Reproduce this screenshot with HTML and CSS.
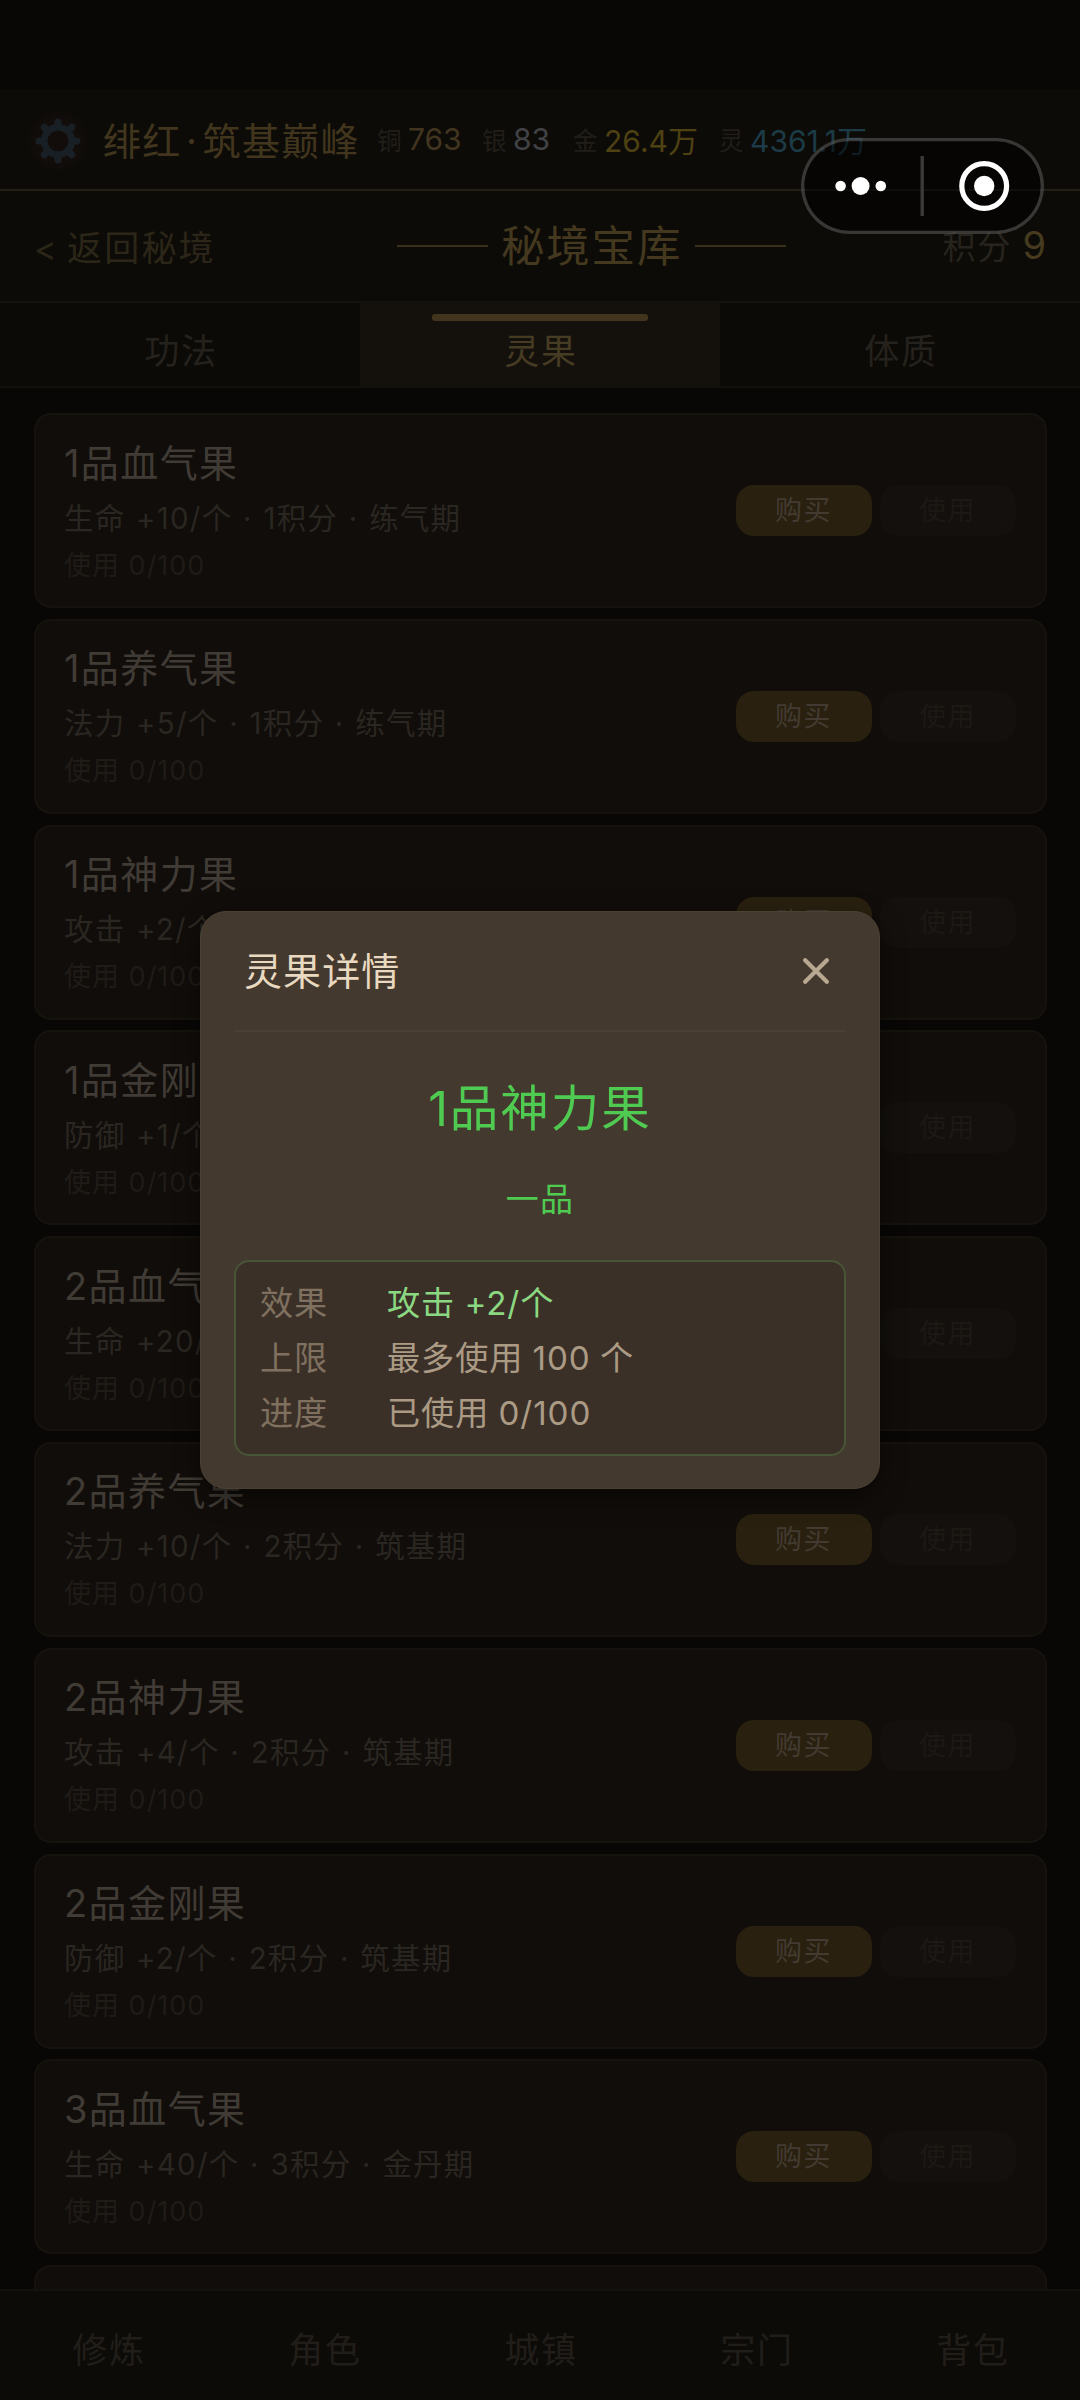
FILE: index.html
```html
<!DOCTYPE html>
<html lang="zh-CN">
<head>
<meta charset="utf-8">
<title>秘境宝库</title>
<link rel="stylesheet" href="styles.css">
</head>
<body>
<div class="screen">
  <header class="status">
    <svg class="gear" viewBox="-30 -30 60 60">
      <circle r="13.8" fill="none" stroke-width="6.6"/>
      <g stroke-width="7" stroke-linecap="round">
        <path d="M0-16V-19M0 16V19M-16 0H-19M16 0H19M-11.5-11.5L-13.7-13.7M11.5-11.5L13.7-13.7M-11.5 11.5L-13.7 13.7M11.5 11.5L13.7 13.7"/>
      </g>
    </svg>
    <div class="player">绯红<i>·</i>筑基巅峰</div>
    <div class="coin copper"><span>铜</span><b>763</b></div>
    <div class="coin silver"><span>银</span><b>83</b></div>
    <div class="coin gold"><span>金</span><b>26.4万</b></div>
    <div class="coin spirit"><span>灵</span><b>4361.1万</b></div>
  </header>

  <div class="titlebar">
    <div class="back"><span>&lt;</span>返回秘境</div>
    <h1>秘境宝库</h1>
    <div class="points"><span>积分</span><b>9</b></div>
  </div>

  <nav class="tabs">
    <div class="tab">功法</div>
    <div class="tab active">灵果</div>
    <div class="tab">体质</div>
  </nav>

  <main class="list">
    <section class="card">
      <div class="info"><h2>1品血气果</h2><p class="desc">生命 +10/个 · 1积分 · 练气期</p><p class="used">使用 0/100</p></div>
      <div class="btn buy">购买</div><div class="btn use">使用</div>
    </section>
    <section class="card">
      <div class="info"><h2>1品养气果</h2><p class="desc">法力 +5/个 · 1积分 · 练气期</p><p class="used">使用 0/100</p></div>
      <div class="btn buy">购买</div><div class="btn use">使用</div>
    </section>
    <section class="card">
      <div class="info"><h2>1品神力果</h2><p class="desc">攻击 +2/个 · 1积分 · 练气期</p><p class="used">使用 0/100</p></div>
      <div class="btn buy">购买</div><div class="btn use">使用</div>
    </section>
    <section class="card">
      <div class="info"><h2>1品金刚果</h2><p class="desc">防御 +1/个 · 1积分 · 练气期</p><p class="used">使用 0/100</p></div>
      <div class="btn buy">购买</div><div class="btn use">使用</div>
    </section>
    <section class="card">
      <div class="info"><h2>2品血气果</h2><p class="desc">生命 +20/个 · 2积分 · 筑基期</p><p class="used">使用 0/100</p></div>
      <div class="btn buy">购买</div><div class="btn use">使用</div>
    </section>
    <section class="card">
      <div class="info"><h2>2品养气果</h2><p class="desc">法力 +10/个 · 2积分 · 筑基期</p><p class="used">使用 0/100</p></div>
      <div class="btn buy">购买</div><div class="btn use">使用</div>
    </section>
    <section class="card">
      <div class="info"><h2>2品神力果</h2><p class="desc">攻击 +4/个 · 2积分 · 筑基期</p><p class="used">使用 0/100</p></div>
      <div class="btn buy">购买</div><div class="btn use">使用</div>
    </section>
    <section class="card">
      <div class="info"><h2>2品金刚果</h2><p class="desc">防御 +2/个 · 2积分 · 筑基期</p><p class="used">使用 0/100</p></div>
      <div class="btn buy">购买</div><div class="btn use">使用</div>
    </section>
    <section class="card">
      <div class="info"><h2>3品血气果</h2><p class="desc">生命 +40/个 · 3积分 · 金丹期</p><p class="used">使用 0/100</p></div>
      <div class="btn buy">购买</div><div class="btn use">使用</div>
    </section>
    <section class="card"></section>
  </main>

  <nav class="bottom">
    <div>修炼</div><div>角色</div><div>城镇</div><div>宗门</div><div>背包</div>
  </nav>

  <div class="modal">
    <div class="modal-head">
      <span>灵果详情</span>
      <svg class="close" viewBox="0 0 26 26"><path d="M2.2 2.2L23.8 23.8M23.8 2.2L2.2 23.8"/></svg>
    </div>
    <div class="fruit">1品神力果</div>
    <div class="grade">一品</div>
    <dl class="facts">
      <dt>效果</dt><dd class="effect">攻击 +2/个</dd>
      <dt>上限</dt><dd>最多使用 100 个</dd>
      <dt>进度</dt><dd>已使用 0/100</dd>
    </dl>
  </div>

  <div class="capsule">
    <svg viewBox="0 0 243 96">
      <g fill="#fff">
        <circle cx="39.6" cy="48" r="5.3"/>
        <circle cx="59.6" cy="48" r="9"/>
        <circle cx="79.8" cy="48" r="5.3"/>
        <circle cx="183.2" cy="48" r="10.2"/>
      </g>
      <path d="M121.2 18V78" stroke="#3a3a3a" stroke-width="3.4"/>
      <circle cx="183.2" cy="48" r="22.4" fill="none" stroke="#fff" stroke-width="5.2"/>
    </svg>
  </div>
</div>
</body>
</html>
```
FILE: styles.css
```css
* {
  box-sizing: border-box;
  margin: 0;
  padding: 0;
}

body {
  background: #080706;
  font-family: Inter, "Noto Sans CJK SC", sans-serif;
  font-weight: 400;
}

h1, h2, b, i {
  font-weight: 400;
  font-style: normal;
}

.screen {
  position: relative;
  display: flex;
  flex-direction: column;
  width: 1080px;
  height: 2400px;
  padding-top: 89px;
  overflow: hidden;
  white-space: nowrap;
}

/* player status */
.status {
  display: flex;
  align-items: center;
  flex: none;
  height: 102px;
  padding-left: 28px;
  background: #0d0b08;
  border-bottom: 2px solid #231e16;
}

.gear {
  flex: none;
  width: 60px;
  height: 60px;
  margin-top: 3px;
  stroke: #192025;
  background: radial-gradient(circle, #120d0b 50%, #0d0b08 72%);
}

.player {
  flex: none;
  width: 288px;
  padding: 0 0 2px 15px;
  font-size: 38px;
  letter-spacing: 1.3px;
  color: #41361d;
}

.player i {
  display: inline-block;
  width: 21px;
  text-align: center;
}

.coin {
  display: flex;
  align-items: center;
  flex: none;
  font-size: 30px;
}

.coin span {
  width: 31px;
  font-size: 24.5px;
  color: #211e19;
}

.copper { width: 105px; margin-left: 1px; color: #41351f; }
.silver { width: 91px; color: #414246; }
.gold { width: 146px; color: #4e4112; }
.spirit { color: #1c3b47; }

/* page title */
.titlebar {
  display: flex;
  align-items: center;
  flex: none;
  height: 112px;
  padding: 0 34px;
  background: #0d0b07;
  border-bottom: 2px solid #14120d;
}

.back {
  width: 363px;
  padding-bottom: 2px;
  font-size: 35px;
  letter-spacing: 2.2px;
  color: #2c2618;
}

.back span {
  display: inline-block;
  width: 33px;
  font-size: 34px;
}

h1 {
  display: flex;
  align-items: center;
  gap: 13px;
  height: 60px;
  line-height: 56px;
  font-size: 43.5px;
  letter-spacing: 1.8px;
  color: #44391f;
}

h1::before,
h1::after {
  content: "";
  width: 91px;
  height: 2px;
  background: #3a301b;
}

.points {
  display: flex;
  align-items: center;
  gap: 10px;
  margin-left: auto;
  padding-bottom: 2px;
  color: #27231d;
  font-size: 33px;
  letter-spacing: 2px;
}

.points b {
  font-size: 38px;
  letter-spacing: 0;
  color: #463a1f;
}

/* tabs */
.tabs {
  display: flex;
  flex: none;
  height: 85px;
  background: #0c0a07;
  border-bottom: 2px solid #12100c;
}

.tab {
  position: relative;
  flex: 1;
  padding: 11px 0 0 2px;
  line-height: 75px;
  text-align: center;
  font-size: 35px;
  letter-spacing: 1.8px;
  color: #25221d;
}

.tab.active {
  background: #14110c;
  color: #463b23;
}

.tab.active::before {
  content: "";
  position: absolute;
  top: 11px;
  left: 72px;
  right: 72px;
  height: 7px;
  border-radius: 3px;
  background: #41361d;
}

/* fruit list */
.list {
  display: flex;
  flex-direction: column;
  flex: 1;
  gap: 10.8px;
  min-height: 0;
  padding: 25px 33.5px 0;
  overflow: hidden;
}

.card {
  display: flex;
  align-items: center;
  flex: none;
  height: 195px;
  padding: 0 29px 0 28.5px;
  background: #110d0a;
  border: 2px solid #16130e;
  border-radius: 17px;
}

.info {
  flex: 1;
}

h2 {
  line-height: 56px;
  font-size: 38px;
  letter-spacing: 1.4px;
  color: #403b35;
}

.desc {
  line-height: 54px;
  font-size: 29.5px;
  letter-spacing: 1.2px;
  word-spacing: 1.2px;
  color: #2a2621;
}

.used {
  line-height: 42px;
  font-size: 27px;
  letter-spacing: 1px;
  color: #1f1b17;
}

.btn {
  width: 136px;
  height: 51px;
  border-radius: 18px;
  line-height: 51px;
  text-align: center;
  font-size: 27px;
  letter-spacing: 1.4px;
}

.buy {
  margin-right: 8px;
  background: #29200f;
  color: #433b31;
}

.use {
  background: #13100d;
  color: #1c1915;
}

/* main navigation */
.bottom {
  display: flex;
  flex: none;
  height: 111px;
  padding-top: 2px;
  background: #0d0b08;
  border-top: 2px solid #14120e;
}

.bottom div {
  flex: 1;
  padding-left: 2px;
  line-height: 115px;
  text-align: center;
  font-size: 35px;
  letter-spacing: 1.8px;
  color: #211e1a;
}

/* detail dialog */
.modal {
  position: absolute;
  top: 911px;
  left: 200px;
  width: 680px;
  height: 578px;
  padding: 0 34px;
  border-radius: 26px;
  border: 1px solid #4a4033;
  background: #44392e;
  box-shadow: 0 8px 24px rgba(0, 0, 0, .5);
}

.modal-head {
  display: flex;
  align-items: center;
  justify-content: space-between;
  height: 120px;
  padding: 0 16px 0 9px;
  border-bottom: 2px solid #4b4134;
  font-size: 38px;
  letter-spacing: 1.1px;
  color: #e8d9c0;
}

.modal-head span {
  padding-bottom: 5px;
}

.close {
  width: 26px;
  height: 26px;
  fill: none;
  stroke: #b8a791;
  stroke-width: 4.2;
  stroke-linecap: round;
}

.fruit {
  margin-top: 37px;
  line-height: 80px;
  text-align: center;
  font-size: 48.5px;
  letter-spacing: 2px;
  color: #4fcb52;
}

.grade {
  margin-top: 20px;
  line-height: 60px;
  text-align: center;
  font-size: 33px;
  letter-spacing: 1.2px;
  color: #4fcb52;
}

.facts {
  display: grid;
  grid-template-columns: 127px 1fr;
  grid-auto-rows: 55px;
  height: 196px;
  margin: 31px -1px 0;
  padding: 14px 24px;
  border: 2px solid #465636;
  border-radius: 15px;
  background: #3b3028;
  line-height: 55px;
  font-size: 33.2px;
  letter-spacing: .9px;
  word-spacing: -1px;
  color: #ab9b85;
}

.facts dt {
  color: #7f705f;
}

.facts .effect {
  color: #8bd882;
}

/* host app capsule */
.capsule {
  position: absolute;
  top: 138px;
  left: 801px;
  width: 243px;
  height: 96px;
  border-radius: 48px;
  background: rgba(0, 0, 0, .5);
  box-shadow: inset 0 0 0 3.3px rgba(255, 255, 255, .2);
}

.capsule svg {
  display: block;
  width: 243px;
  height: 96px;
}
```
